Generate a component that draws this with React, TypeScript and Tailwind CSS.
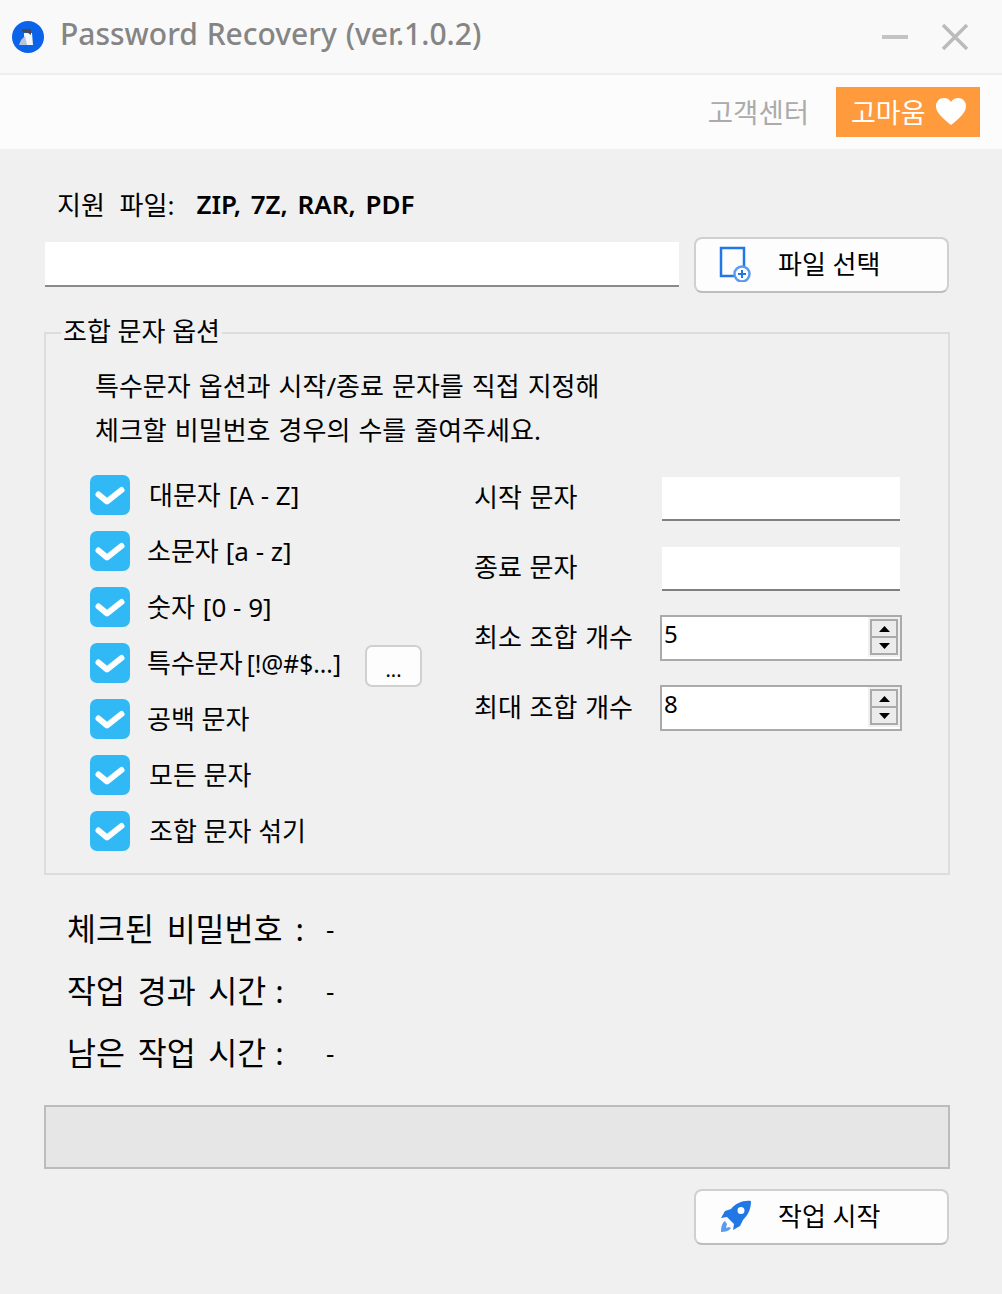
const KR = "font-['Noto_Sans','Noto_Sans_CJK_KR',sans-serif]";

const CHECKS = [
  { name: "대문자", range: "[A - Z]", pad: "pl-[19px]", rangeClass: "ml-[8px]", extra: false },
  { name: "소문자", range: "[a - z]", pad: "pl-[17px]", rangeClass: "ml-[7px]", extra: false },
  { name: "숫자", range: "[0 - 9]", pad: "pl-[17px]", rangeClass: "ml-[8px]", extra: false },
  { name: "특수문자", range: "[!@#$...]", pad: "pl-[17px]", rangeClass: "ml-[4px] text-[24.5px]", extra: true },
  { name: "공백 문자", range: "", pad: "pl-[17px]", rangeClass: "", extra: false },
  { name: "모든 문자", range: "", pad: "pl-[19px]", rangeClass: "", extra: false },
  { name: "조합 문자 섞기", range: "", pad: "pl-[19px]", rangeClass: "", extra: false },
];

const RESULTS = [
  { label: "체크된 비밀번호", colon: "ml-[13px]" },
  { label: "작업 경과 시간", colon: "ml-[9px]" },
  { label: "남은 작업 시간", colon: "ml-[9px]" },
];

function CheckBox() {
  return (
    <span className="flex h-10 w-10 shrink-0 items-center justify-center rounded-[7px] bg-[#30b9f4]">
      <svg className="h-10 w-10" viewBox="0 0 40 40" fill="none" aria-hidden>
        <path d="M8.500 19.500 17 26.500 31.500 15" stroke="#fff" strokeWidth="6" strokeLinejoin="round" strokeLinecap="round" />
      </svg>
    </span>
  );
}

function SpinBox({ value }: { value: string }) {
  return (
    <div className="flex h-[46px] w-[242px] border-2 border-[#aaaaaa] bg-white">
      <span className="flex-1 pl-[2px] text-[24px] leading-[34px] text-black">{value}</span>
      <div className="flex h-[40px] w-[32px] flex-col bg-[#f0f0f0] p-[2px]">
        <div className="flex flex-1 flex-col border-2 border-[#aaaaaa]">
          <span className="flex flex-1 items-center justify-center border-b-2 border-[#aaaaaa] bg-[#ececec]">
            <svg width="11" height="6" viewBox="0 0 11 6" aria-hidden>
              <path d="M5.500 0 11 6H0Z" fill="#000" />
            </svg>
          </span>
          <span className="flex flex-1 items-center justify-center bg-[#ececec]">
            <svg width="11" height="6" viewBox="0 0 11 6" aria-hidden>
              <path d="M0 0H11L5.500 6Z" fill="#000" />
            </svg>
          </span>
        </div>
      </div>
    </div>
  );
}

function TextBox() {
  return <div className="ml-[2px] h-[44px] w-[238px] self-end border-b-2 border-[#808080] bg-white" />;
}

function ActionButton({ icon, label }: { icon: React.ReactNode; label: string }) {
  return (
    <button
      type="button"
      className="flex h-[56px] w-[255px] items-center rounded-[8px] border-2 border-[#d0d0d0] border-b-[#bdbdbd] bg-[#fdfdfd] pl-[21px] text-[26px] text-black"
    >
      <span className="-mt-[2px] flex w-[36px] justify-center">{icon}</span>
      <span className="-mt-[2px] ml-[25px] leading-none">{label}</span>
    </button>
  );
}

export default function App() {
  return (
    <div className={`h-[1294px] w-[1002px] overflow-hidden bg-[#f0f0f0] ${KR}`}>
      <header className="flex h-[75px] items-center border-b-2 border-[#eeeeee] bg-[#f9f9f9] pl-[12px] pr-[33px]">
        <svg className="h-8 w-8" viewBox="0 0 32 32" aria-hidden>
          <circle cx="16" cy="16" r="16" fill="#0b63ea" />
          <path d="M12 12h8l1 12h-9Z" fill="#f4f6fa" />
          <path d="M7 24l2-5 4-4 2 9Z" fill="#b9c4d8" />
          <path d="M10 8h9v6l-3-2-6-1Z" fill="#4a4a52" />
        </svg>
        <h1 className="-mt-[6px] ml-[16px] text-[30px] font-medium leading-none text-[#858585] [word-spacing:1px]">
          Password Recovery (ver.1.0.2)
        </h1>
        <svg className="ml-auto h-[26px] w-[26px]" viewBox="0 0 26 26" aria-hidden>
          <path d="M0 13h26" stroke="#c4c4c4" strokeWidth="4" />
        </svg>
        <svg className="ml-[33px] h-[28px] w-[28px]" viewBox="0 0 28 28" aria-hidden>
          <path d="M2 2 26 26M26 2 2 26" stroke="#bbbbbb" strokeWidth="3.500" />
        </svg>
      </header>

      <div className="flex h-[75px] items-center justify-end border-b border-[#f0f0f0] bg-[#fcfcfc] pr-[22px]">
        <span className="mr-[27px] mt-[1px] text-[27.500px] leading-none text-[#ababab]">고객센터</span>
        <div className="flex h-[50px] w-[144px] items-center bg-[#ff9a3d] pl-[15px] text-[27px] text-white">
          <span className="leading-none">고마움</span>
          <svg className="ml-[9px] h-[30px] w-[32px]" viewBox="0 0 32 30" aria-hidden>
            <path d="M16 28C6 20 1 15 1 9c0-4.500 3.500-8 8-8 3 0 5.500 1.500 7 4 1.500-2.500 4-4 7-4 4.500 0 8 3.500 8 8 0 6-5 11-15 19Z" fill="#fff" />
          </svg>
        </div>
      </div>

      <main className="px-[44px]">
        <p className="mt-[33px] flex h-[44px] items-center pl-[13px] text-[26px] text-black">
          <span className="[word-spacing:8px]">지원 파일:</span>
          <span className="-mt-[2px] ml-[22px] font-semibold [word-spacing:3px]">ZIP, 7Z, RAR, PDF</span>
        </p>

        <div className="mt-[10px] flex items-start justify-between pr-[9px]">
          <div className="ml-px mt-[5px] h-[45px] w-[634px] border-b-2 border-[#8a8a8a] bg-white" />
          <ActionButton
            label="파일 선택"
            icon={
              <svg width="32" height="36" viewBox="0 0 32 36" fill="none" aria-hidden>
                <path d="M25 20V2H2v28h15" stroke="#2277e6" strokeWidth="2.500" />
                <circle cx="23" cy="28" r="7.500" stroke="#5a9bf0" strokeWidth="2.500" fill="#fdfdfd" />
                <path d="M23 24v8M19 28h8" stroke="#2277e6" strokeWidth="2" />
              </svg>
            }
          />
        </div>

        <fieldset className="mt-[22px] h-[560px] w-[906px] border-2 border-[#dcdcdc] px-[44px]">
          <legend className="-ml-[29px] h-[36px] px-[2px] text-[26px] leading-[32px] text-black">조합 문자 옵션</legend>
          <div className="mt-[13px] pl-[5px] text-[26px] leading-[44px] text-black [word-spacing:1.300px]">
            <p>특수문자 옵션과 시작/종료 문자를 직접 지정해</p>
            <p>체크할 비밀번호 경우의 수를 줄여주세요.</p>
          </div>

          <div className="mt-[23px] flex">
            <ul className="flex w-[385px] flex-col gap-[16px]">
              {CHECKS.map((c) => (
                <li key={c.name} className="flex h-10 items-center">
                  <CheckBox />
                  <span className={`${c.pad} text-[26px] leading-none text-black`}>
                    {c.name}
                    {c.range && <span className={c.rangeClass}>{c.range}</span>}
                  </span>
                  {c.extra && (
                    <button
                      type="button"
                      className="ml-[24px] mt-[6px] h-[42px] w-[57px] rounded-[7px] border-2 border-[#d0d0d0] bg-[#fdfdfd] pt-[8px] text-[20px] leading-none text-black"
                    >
                      ...
                    </button>
                  )}
                </li>
              ))}
            </ul>
            <div className="flex flex-col gap-[24px]">
              {[
                { label: "시작 문자", box: <TextBox /> },
                { label: "종료 문자", box: <TextBox /> },
                { label: "최소 조합 개수", box: <SpinBox value="5" /> },
                { label: "최대 조합 개수", box: <SpinBox value="8" /> },
              ].map((r) => (
                <div key={r.label} className="flex h-[46px] items-center">
                  <span className="-ml-px -mt-[2px] w-[186px] text-[26px] leading-none text-black [word-spacing:1px]">{r.label}</span>
                  {r.box}
                </div>
              ))}
            </div>
          </div>
        </fieldset>

        <dl className="mt-[23px] flex flex-col pl-[23px] text-[31.500px] leading-[62px] text-black [word-spacing:4.500px]">
          {RESULTS.map((r) => (
            <div key={r.label} className="flex">
              <dt className="w-[259px]">
                {r.label}
                <span className={r.colon}>:</span>
              </dt>
              <dd className="text-[26px]">-</dd>
            </div>
          ))}
        </dl>

        <div className="mt-[21px] h-[64px] w-[906px] border-2 border-[#bcbcbc] bg-[#e6e6e6]" />

        <div className="mt-[20px] flex justify-end pr-[9px]">
          <ActionButton
            label="작업 시작"
            icon={
              <svg width="32" height="33" viewBox="0 0 32 33" aria-hidden>
                <path
                  fillRule="evenodd"
                  d="M32 1c-8-1-15 2-20 8L6 11l-4 7 6-1 7 7-1 6 7-4 3-6c5-5 8-11 8-19ZM22 7a3.500 3.500 0 1 1 0 7 3.500 3.500 0 0 1 0-7Z"
                  fill="#2277e6"
                />
                <path d="M6 21c-3 2-4 6-4 11 4 0 8-1 10-4l-2-1-3 1 1-4Z" fill="#5a9bf0" />
              </svg>
            }
          />
        </div>
      </main>
    </div>
  );
}
